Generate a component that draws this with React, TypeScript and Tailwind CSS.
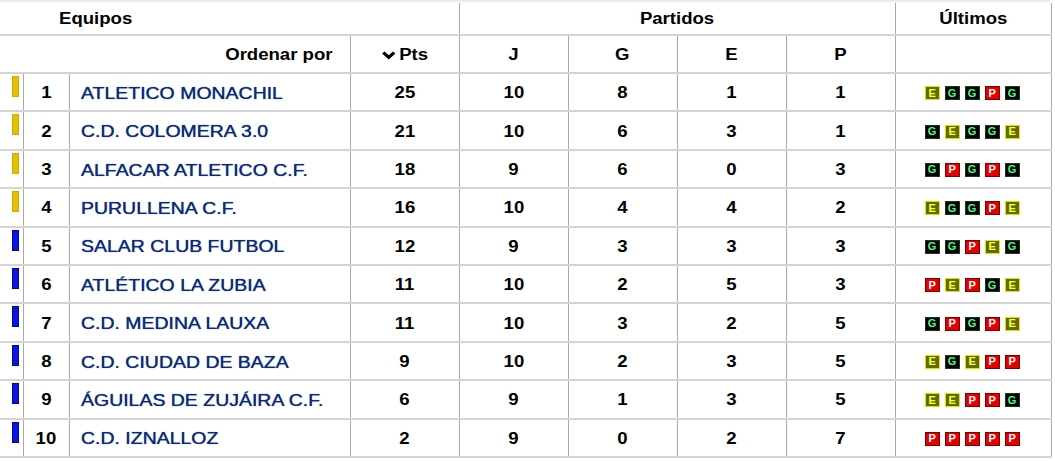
import React from "react";

type Team = { pos: number; name: string; pts: number; j: number; g: number; e: number; p: number; last: string; zone: "y" | "b" };

const teams: Team[] = [
  { pos: 1, name: "ATLETICO MONACHIL", pts: 25, j: 10, g: 8, e: 1, p: 1, last: "EGGPG", zone: "y" },
  { pos: 2, name: "C.D. COLOMERA 3.0", pts: 21, j: 10, g: 6, e: 3, p: 1, last: "GEGGE", zone: "y" },
  { pos: 3, name: "ALFACAR ATLETICO C.F.", pts: 18, j: 9, g: 6, e: 0, p: 3, last: "GPGPG", zone: "y" },
  { pos: 4, name: "PURULLENA C.F.", pts: 16, j: 10, g: 4, e: 4, p: 2, last: "EGGPE", zone: "y" },
  { pos: 5, name: "SALAR CLUB FUTBOL", pts: 12, j: 9, g: 3, e: 3, p: 3, last: "GGPEG", zone: "b" },
  { pos: 6, name: "ATLÉTICO LA ZUBIA", pts: 11, j: 10, g: 2, e: 5, p: 3, last: "PEPGE", zone: "b" },
  { pos: 7, name: "C.D. MEDINA LAUXA", pts: 11, j: 10, g: 3, e: 2, p: 5, last: "GPGPE", zone: "b" },
  { pos: 8, name: "C.D. CIUDAD DE BAZA", pts: 9, j: 10, g: 2, e: 3, p: 5, last: "EGEPP", zone: "b" },
  { pos: 9, name: "ÁGUILAS DE ZUJÁIRA C.F.", pts: 6, j: 9, g: 1, e: 3, p: 5, last: "EEPPG", zone: "b" },
  { pos: 10, name: "C.D. IZNALLOZ", pts: 2, j: 9, g: 0, e: 2, p: 7, last: "PPPPP", zone: "b" },
];

// the original screenshot renders text a bit wider than Arial
function Wide({ children, origin = "origin-center" }: { children: React.ReactNode; origin?: string }) {
  return <span className={`inline-block scale-x-[1.16] ${origin}`}>{children}</span>;
}

function Badge({ r }: { r: string }) {
  const cls =
    r === "E"
      ? "bg-[#5d6b00] text-[#ffff33] border-[#e8e000]"
      : r === "G"
      ? "bg-black text-[#44ff88] border-[#1a3a1a]"
      : "bg-[#e00000] text-white border-[#800000]";
  return (
    <span className={`inline-flex h-[14px] w-[15px] items-center justify-center border text-[11px] font-bold leading-none ${cls}`}>
      {r}
    </span>
  );
}

const cell = "border-l border-[#a9a9a9] text-center pt-[2px]";

export default function App() {
  return (
    <div className="h-[461px] w-[1055px] overflow-hidden bg-white font-['Liberation_Sans',Arial,sans-serif] text-[16px] text-black">
      <div className="h-[3px] w-[1050px] bg-gradient-to-b from-[#e4e4e4] to-white" />
      <table className="w-[1051px] table-fixed border-collapse">
        <colgroup>
          <col className="w-[23px]" />
          <col className="w-[46px]" />
          <col className="w-[281px]" />
          <col className="w-[109px]" />
          <col className="w-[109px]" />
          <col className="w-[109px]" />
          <col className="w-[109px]" />
          <col className="w-[109px]" />
          <col className="w-[156px]" />
        </colgroup>
        <thead>
          <tr className="h-[32px] border-b-2 border-[#d4d4d4] font-bold">
            <th colSpan={4} className="border-r border-[#a9a9a9] pl-[59px] text-left font-bold">
              <Wide origin="origin-left">Equipos</Wide>
            </th>
            <th colSpan={4} className="border-r border-[#a9a9a9] font-bold">
              <Wide>Partidos</Wide>
            </th>
            <th className="border-r border-[#a9a9a9] font-bold">
              <Wide>Últimos</Wide>
            </th>
          </tr>
          <tr className="h-[38px] border-b-2 border-[#d4d4d4]">
            <th colSpan={3} className="pr-[17px] pt-[2px] text-right font-bold">
              <Wide origin="origin-right">Ordenar por</Wide>
            </th>
            <th className={`${cell} font-bold`}>
              <Wide>
                <span className="inline-flex items-center gap-[3px]">
                  <svg width="12" height="9" viewBox="0 0 12 9" className="mt-[1px]">
                    <path d="M1.3 1.5 L6 6.3 L10.7 1.5" fill="none" stroke="black" strokeWidth="3" />
                  </svg>
                  Pts
                </span>
              </Wide>
            </th>
            <th className={`${cell} font-bold`}><Wide>J</Wide></th>
            <th className={`${cell} font-bold`}><Wide>G</Wide></th>
            <th className={`${cell} font-bold`}><Wide>E</Wide></th>
            <th className={`${cell} font-bold`}><Wide>P</Wide></th>
            <th className={`${cell} border-r`} />
          </tr>
        </thead>
        <tbody>
          {teams.map((t) => (
            <tr key={t.pos} className="h-[38.4px] border-b-2 border-[#d4d4d4] font-bold">
              <td className="pl-[12px] pt-[2px] align-top">
                <div
                  className={`h-[21px] w-[7px] ${
                    t.zone === "y" ? "bg-[#e6c000] border border-[#c8b000]" : "bg-[#0a14e6] border border-[#000a80]"
                  }`}
                />
              </td>
              <td className={cell}><Wide>{t.pos}</Wide></td>
              <td className="border-l border-[#a9a9a9] pl-[11px] pt-[2px] text-[16.5px] font-normal text-[#0c2a78] [text-shadow:0_0_0.8px_#0c2a78]">
                <span className="inline-block origin-left scale-x-[1.18] whitespace-nowrap">{t.name}</span>
              </td>
              <td className={cell}><Wide>{t.pts}</Wide></td>
              <td className={cell}><Wide>{t.j}</Wide></td>
              <td className={cell}><Wide>{t.g}</Wide></td>
              <td className={cell}><Wide>{t.e}</Wide></td>
              <td className={cell}><Wide>{t.p}</Wide></td>
              <td className={`${cell} border-r`}>
                <div className="flex justify-center gap-[5px] pr-[2px]">
                  {t.last.split("").map((r, i) => (
                    <Badge key={i} r={r} />
                  ))}
                </div>
              </td>
            </tr>
          ))}
        </tbody>
      </table>
    </div>
  );
}
